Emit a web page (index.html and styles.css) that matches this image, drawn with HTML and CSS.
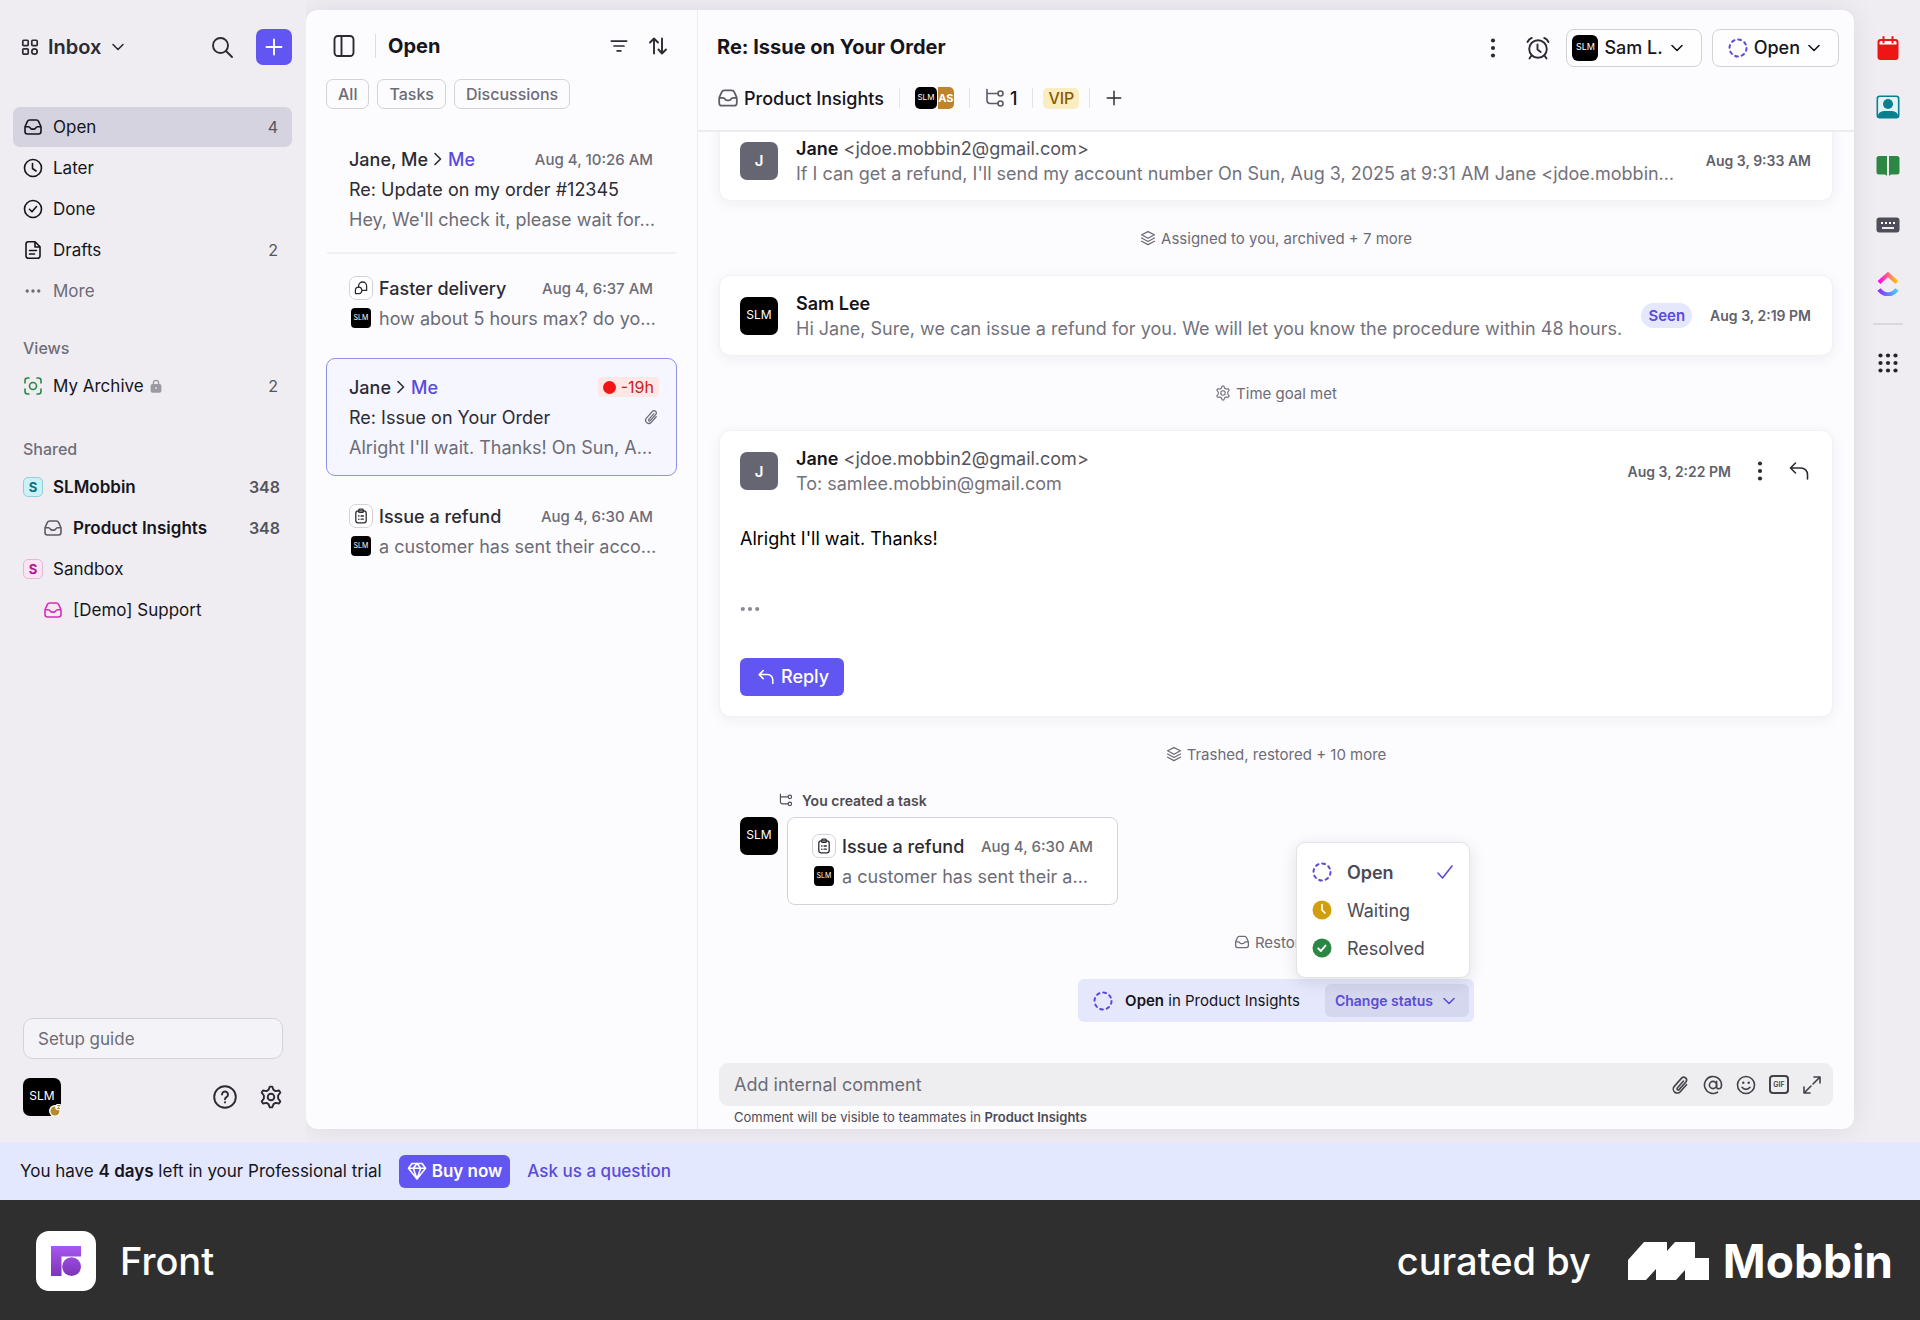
FILE: index.html
```html
<!DOCTYPE html>
<html lang="en">
<head>
<meta charset="utf-8">
<meta name="viewport" content="width=device-width, initial-scale=1">
<title>Front – Re: Issue on Your Order</title>
<link rel="stylesheet" href="styles.css">
</head>
<body>
<svg class="sprite" aria-hidden="true">
  <defs>
    <linearGradient id="cu-top" x1="0" x2="1"><stop offset="0" stop-color="#ff02f0"/><stop offset=".6" stop-color="#ff7a6b"/><stop offset="1" stop-color="#ffc800"/></linearGradient>
    <linearGradient id="cu-bottom" x1="0" x2="1"><stop offset="0" stop-color="#8930fd"/><stop offset="1" stop-color="#49ccf9"/></linearGradient>
    <linearGradient id="front-fill" gradientUnits="userSpaceOnUse" x1="0" y1="15" x2="0" y2="45"><stop offset="0" stop-color="#a857f0"/><stop offset="1" stop-color="#7d35b8"/></linearGradient>
  </defs>
  <symbol id="i-apps" viewBox="0 0 20 20"><rect x="2" y="2.500" width="6" height="6" rx="1"/><rect x="12" y="2.500" width="6" height="6" rx="1"/><rect x="2" y="12" width="6" height="6" rx="1"/><circle cx="15" cy="15" r="3"/></symbol>
  <symbol id="i-chevron" viewBox="0 0 16 16"><path d="M3 5.500l5 5 5-5"/></symbol>
  <symbol id="i-right" viewBox="0 0 12 16"><path d="M3 2.500l5.500 5.500L3 13.500"/></symbol>
  <symbol id="i-search" viewBox="0 0 24 24"><circle cx="10.500" cy="10.500" r="7.500"/><path d="M16 16l6 6"/></symbol>
  <symbol id="i-plus" viewBox="0 0 20 20"><path d="M10 2.500v15M2.500 10h15"/></symbol>
  <symbol id="i-inbox" viewBox="0 0 20 20"><path d="M4.300 4.600C4.800 3.500 5.600 3 6.700 3h6.600c1.100 0 1.900.5 2.400 1.600l2 4.400c.2.500.3.900.3 1.400v4.100a2.500 2.500 0 0 1-2.500 2.500h-11A2.500 2.500 0 0 1 2 14.500v-4.100c0-.5.1-.9.3-1.400zM2.200 9.800h3.300c.9 0 1.300.4 1.700 1.100.4.800 1 1.200 1.800 1.200h2c.8 0 1.400-.4 1.800-1.200.4-.7.8-1.100 1.700-1.100h3.300"/></symbol>
  <symbol id="i-clock" viewBox="0 0 20 20"><circle cx="10" cy="10" r="8.500"/><path d="M9.500 5.500v5l3.500 2.500"/></symbol>
  <symbol id="i-done" viewBox="0 0 20 20"><circle cx="10" cy="10" r="8.500"/><path d="M6.500 10.300l2.500 2.500 4.500-5.300"/></symbol>
  <symbol id="i-doc" viewBox="0 0 20 20"><path d="M3 4a2.300 2.300 0 0 1 2.300-2.300H12l5 5V16a2.300 2.300 0 0 1-2.300 2.300H5.300A2.300 2.300 0 0 1 3 16zM12 2v5h5M6.500 10.500h7M6.500 14h5"/></symbol>
  <symbol id="i-dots" viewBox="0 0 20 20"><g fill="currentColor" stroke="none"><circle cx="2.800" cy="10" r="2.100"/><circle cx="10" cy="10" r="2.100"/><circle cx="17.200" cy="10" r="2.100"/></g></symbol>
  <symbol id="i-kebab" viewBox="0 0 24 24"><g fill="currentColor" stroke="none"><circle cx="12" cy="3" r="2.500"/><circle cx="12" cy="12" r="2.500"/><circle cx="12" cy="21" r="2.500"/></g></symbol>
  <symbol id="i-view" viewBox="0 0 20 20"><path d="M2 7V4.500A2.500 2.500 0 0 1 4.500 2H6M14 2h1.500A2.500 2.500 0 0 1 18 4.500V7M18 13v2.500a2.500 2.500 0 0 1-2.500 2.500H14M6 18H4.500A2.500 2.500 0 0 1 2 15.500V13"/><circle cx="10" cy="10" r="3.500"/></symbol>
  <symbol id="i-lock" viewBox="0 0 14 16"><path d="M4 7V4.500a3 3 0 0 1 6 0V7"/><rect x="1.500" y="6.500" width="11" height="8.500" rx="1.500" fill="currentColor"/><circle cx="7" cy="10.500" r=".9" fill="#fff" stroke="none"/></symbol>
  <symbol id="i-help" viewBox="0 0 24 24"><circle cx="12" cy="12" r="10.800"/><path d="M9 9.500a3 3 0 1 1 4.500 2.600c-1 .6-1.500 1-1.500 2.200"/><circle cx="12" cy="17.300" r="1.100" fill="currentColor" stroke="none"/></symbol>
  <symbol id="i-gear" viewBox="0 0 24 24"><path d="M10.800 1.600h2.400l1.300 3.300 2 1.200 3.500-.6 1.300 2.100-2.200 2.900v3l2.200 2.900-1.300 2.100-3.500-.6-2 1.200-1.300 3.300h-2.400l-1.300-3.300-2-1.200-3.500.6-1.300-2.100 2.200-2.900v-3L2.700 7.600 4 5.500l3.500.6 2-1.200z"/><circle cx="12" cy="12" r="3.300"/></symbol>
  <symbol id="i-panel" viewBox="0 0 22 22"><rect x="1.500" y="1" width="19" height="20" rx="3.500"/><path d="M8.500 1v20"/></symbol>
  <symbol id="i-filter" viewBox="0 0 20 20"><path d="M1.500 4.500h17M4.500 10h11M8 15.500h4"/></symbol>
  <symbol id="i-sort" viewBox="0 0 20 20"><path d="M6 17.500v-15M2 6.500l4-4 4 4M14 2.500v15M10.500 13.500l3.500 4 4-4"/></symbol>
  <symbol id="i-chat" viewBox="0 0 20 20"><path d="M7 9V7.500a5 5 0 0 1 10 0V13h-5"/><path d="M3 17v-4a4 4 0 0 1 8 0 3.500 3.500 0 0 1-3.500 4z"/></symbol>
  <symbol id="i-task" viewBox="0 0 20 20"><rect x="3.500" y="3.500" width="13" height="15" rx="3"/><rect x="7" y="1.500" width="6" height="4" rx="1.500"/><path d="M7 10h.5M10 10h3M7 14h.5M10 14h3"/></symbol>
  <symbol id="i-clip" viewBox="0 0 20 20"><path d="M13.500 6l-6.200 7a1.200 1.200 0 0 0 1.800 1.600l7-7.900a2.900 2.900 0 0 0-4.300-3.800L4.300 11.400a4 4 0 0 0 6 5.300l6.200-7"/></symbol>
  <symbol id="i-tree" viewBox="0 0 20 20"><path d="M2 1.500v11a3 3 0 0 0 3 3h8M2 5.500h11"/><circle cx="15.500" cy="5.500" r="2.500"/><circle cx="15.500" cy="15.500" r="2.500"/></symbol>
  <symbol id="i-alarm" viewBox="0 0 24 24"><circle cx="12" cy="13" r="8.800"/><path d="M11.500 8.500v5l3.200 2.500M1.500 6C2.300 4.200 3.800 2.700 5.800 1.900M22.500 6c-.8-1.800-2.300-3.300-4.300-4.100M5.500 19.500l-2 3M18.500 19.500l2 3"/></symbol>
  <symbol id="i-dashed" viewBox="0 0 20 20"><circle cx="10" cy="10" r="8.500" stroke-width="2" stroke-dasharray="2.800 3.875"/></symbol>
  <symbol id="i-layers" viewBox="0 0 20 20"><path d="M10 2l8 4-8 4.300L2 6zM2 10l8 4.300 8-4.300M2 14l8 4.300 8-4.300"/></symbol>
  <symbol id="i-reply" viewBox="0 0 20 20"><path d="M6.500 2L1.500 7l5 5M1.500 7H12a6.500 6.500 0 0 1 6.500 6.500V18"/></symbol>
  <symbol id="i-check" viewBox="0 0 18 18"><path d="M2 10l4.500 5L16 3"/></symbol>
  <symbol id="i-at" viewBox="0 0 20 20"><circle cx="10" cy="10" r="3.600"/><path d="M13.600 6.400V11.500c0 1.500.8 2.300 2 2.300 1.800 0 2.900-1.600 2.900-3.800a8.500 8.500 0 1 0-4 7.200"/></symbol>
  <symbol id="i-smile" viewBox="0 0 20 20"><circle cx="10" cy="10" r="8.500"/><path d="M6 12.300c2 2.700 6 2.700 8 0"/><g fill="currentColor" stroke="none"><circle cx="7.300" cy="7.700" r="1.200"/><circle cx="12.700" cy="7.700" r="1.200"/></g></symbol>
  <symbol id="i-expand" viewBox="0 0 20 20"><path d="M12 2h6v6M18 2l-7 7M8 18H2v-6M2 18l7-7"/></symbol>
  <symbol id="i-gem" viewBox="0 0 20 20"><path d="M5 2.500h10l3.500 4.800L10 18 1.500 7.300zM1.500 7.300h17M10 2.500L6.300 7.300 10 18l3.700-10.700z"/></symbol>
</svg>

<div class="app">
  <aside class="sidebar">
    <header class="sidebar-head">
      <button class="plain workspace-switch"><svg class="ico s18 bold"><use href="#i-apps"/></svg><span>Inbox</span><svg class="ico s16"><use href="#i-chevron"/></svg></button>
      <button class="plain" aria-label="Search"><svg class="ico s24"><use href="#i-search"/></svg></button>
      <button class="compose" aria-label="Compose"><svg class="ico s20 bold"><use href="#i-plus"/></svg></button>
    </header>
    <nav class="nav">
      <a class="nav-row active" href="#"><svg class="ico s20"><use href="#i-inbox"/></svg><span>Open</span><span class="count">4</span></a>
      <a class="nav-row" href="#"><svg class="ico s20"><use href="#i-clock"/></svg><span>Later</span></a>
      <a class="nav-row" href="#"><svg class="ico s20"><use href="#i-done"/></svg><span>Done</span></a>
      <a class="nav-row" href="#"><svg class="ico s20"><use href="#i-doc"/></svg><span>Drafts</span><span class="count">2</span></a>
      <a class="nav-row muted" href="#"><svg class="ico s20 dots"><use href="#i-dots"/></svg><span>More</span></a>
    </nav>
    <h2 class="nav-title">Views</h2>
    <nav class="nav">
      <a class="nav-row" href="#"><svg class="ico s20 green"><use href="#i-view"/></svg><span>My Archive</span><svg class="ico lock"><use href="#i-lock"/></svg><span class="count">2</span></a>
    </nav>
    <h2 class="nav-title shared">Shared</h2>
    <nav class="nav">
      <a class="nav-row strong" href="#"><span class="team teal">S</span><span>SLMobbin</span><span class="count">348</span></a>
      <a class="nav-row strong child" href="#"><svg class="ico s20 grey"><use href="#i-inbox"/></svg><span>Product Insights</span><span class="count">348</span></a>
      <a class="nav-row" href="#"><span class="team pink">S</span><span>Sandbox</span></a>
      <a class="nav-row child" href="#"><svg class="ico s20 magenta"><use href="#i-inbox"/></svg><span>[Demo] Support</span></a>
    </nav>
    <footer class="sidebar-foot">
      <button class="setup">Setup guide</button>
      <div class="me">
        <span class="me-avatar"><span class="avatar a38">SLM</span><svg class="status-badge" viewBox="0 0 12 12"><circle cx="6" cy="7" r="6" fill="#fff"/><circle cx="6" cy="7" r="4.500" fill="#b78a2b"/><circle cx="9.500" cy="3" r="3.300" fill="#fff"/><path d="M8 1.500h3L8.500 4.500h2.500" fill="none" stroke="#b78a2b"/></svg></span>
        <button class="plain" aria-label="Help"><svg class="ico s24"><use href="#i-help"/></svg></button>
        <button class="plain" aria-label="Settings"><svg class="ico s24"><use href="#i-gear"/></svg></button>
      </div>
    </footer>
  </aside>

  <main class="workspace">
    <section class="list">
      <header class="list-head">
        <button class="plain" aria-label="Toggle sidebar"><svg class="ico s22 bold"><use href="#i-panel"/></svg></button>
        <h1>Open</h1>
        <button class="plain" aria-label="Filter"><svg class="ico s18 bold"><use href="#i-filter"/></svg></button>
        <button class="plain" aria-label="Sort"><svg class="ico s20 bold"><use href="#i-sort"/></svg></button>
      </header>
      <div class="chips"><button>All</button><button>Tasks</button><button>Discussions</button></div>
      <div class="items">
        <article class="item divided">
          <div class="line"><span class="who">Jane, Me<svg class="ico arrow"><use href="#i-right"/></svg><span class="to">Me</span></span><time>Aug 4, 10:26 AM</time></div>
          <div class="line"><span class="subject">Re: Update on my order #12345</span></div>
          <div class="line"><span class="snippet">Hey, We'll check it, please wait for…</span></div>
        </article>
        <article class="item">
          <div class="line"><span class="kind"><svg class="ico s16"><use href="#i-chat"/></svg></span><span class="who">Faster delivery</span><time>Aug 4, 6:37 AM</time></div>
          <div class="line"><span class="slot"><span class="avatar a20">SLM</span></span><span class="snippet">how about 5 hours max? do yo…</span></div>
        </article>
        <article class="item selected">
          <div class="line"><span class="who">Jane<svg class="ico arrow"><use href="#i-right"/></svg><span class="to">Me</span></span><span class="overdue">-19h</span></div>
          <div class="line"><span class="subject">Re: Issue on Your Order</span><svg class="ico s16 clip"><use href="#i-clip"/></svg></div>
          <div class="line"><span class="snippet">Alright I'll wait. Thanks! On Sun, A…</span></div>
        </article>
        <article class="item">
          <div class="line"><span class="kind"><svg class="ico s16"><use href="#i-task"/></svg></span><span class="who">Issue a refund</span><time>Aug 4, 6:30 AM</time></div>
          <div class="line"><span class="slot"><span class="avatar a20">SLM</span></span><span class="snippet">a customer has sent their acco…</span></div>
        </article>
      </div>
    </section>

    <section class="detail">
      <header class="detail-head">
        <div class="title-row">
          <h1>Re: Issue on Your Order</h1>
          <button class="plain" aria-label="More actions"><svg class="ico s20"><use href="#i-kebab"/></svg></button>
          <button class="plain snooze" aria-label="Snooze"><svg class="ico s24"><use href="#i-alarm"/></svg></button>
          <button class="picker assignee"><span class="avatar a26">SLM</span><span>Sam L.</span><svg class="ico s16"><use href="#i-chevron"/></svg></button>
          <button class="picker"><svg class="ico s20 violet"><use href="#i-dashed"/></svg><span>Open</span><svg class="ico s16"><use href="#i-chevron"/></svg></button>
        </div>
        <div class="meta-row">
          <span class="inbox-name"><svg class="ico s22 grey"><use href="#i-inbox"/></svg>Product Insights</span>
          <i class="sep"></i>
          <span class="people"><span class="avatar a22">SLM</span><span class="initials">AS</span></span>
          <i class="sep"></i>
          <span class="subtasks"><svg class="ico s20 grey"><use href="#i-tree"/></svg>1</span>
          <i class="sep"></i>
          <span class="tag">VIP</span>
          <i class="sep"></i>
          <button class="plain" aria-label="Add tag"><svg class="ico s18"><use href="#i-plus"/></svg></button>
        </div>
      </header>

      <div class="thread">
        <article class="card">
          <span class="letter">J</span>
          <div class="body"><p><b>Jane</b> <span class="address">&lt;jdoe.mobbin2@gmail.com&gt;</span></p><p class="preview">If I can get a refund, I'll send my account number On Sun, Aug 3, 2025 at 9:31 AM Jane &lt;jdoe.mobbin…</p></div>
          <time>Aug 3, 9:33 AM</time>
        </article>
        <p class="event"><svg class="ico s16"><use href="#i-layers"/></svg>Assigned to you, archived + 7 more</p>
        <article class="card">
          <span class="avatar a38">SLM</span>
          <div class="body"><p><b>Sam Lee</b></p><p class="preview">Hi Jane, Sure, we can issue a refund for you. We will let you know the procedure within 48 hours.</p></div>
          <span class="seen">Seen</span>
          <time>Aug 3, 2:19 PM</time>
        </article>
        <p class="event"><svg class="ico s16"><use href="#i-gear"/></svg>Time goal met</p>
        <article class="card open">
          <span class="letter">J</span>
          <div class="body"><p><b>Jane</b> <span class="address">&lt;jdoe.mobbin2@gmail.com&gt;</span></p><p class="preview">To: samlee.mobbin@gmail.com</p></div>
          <div class="card-tools">
            <time>Aug 3, 2:22 PM</time>
            <button class="plain" aria-label="Message actions"><svg class="ico s20"><use href="#i-kebab"/></svg></button>
            <button class="plain" aria-label="Reply"><svg class="ico s20"><use href="#i-reply"/></svg></button>
          </div>
          <div class="message">
            <p>Alright I'll wait. Thanks!</p>
            <button class="plain quoted" aria-label="Show quoted text"><svg class="ico s20"><use href="#i-dots"/></svg></button>
            <button class="reply"><svg class="ico s16 bold"><use href="#i-reply"/></svg>Reply</button>
          </div>
        </article>
        <p class="event"><svg class="ico s16"><use href="#i-layers"/></svg>Trashed, restored + 10 more</p>
        <div class="task">
          <p class="task-title"><svg class="ico s14"><use href="#i-tree"/></svg>You created a task</p>
          <span class="avatar a38">SLM</span>
          <article class="task-card">
            <div class="line"><span class="kind"><svg class="ico s16"><use href="#i-task"/></svg></span><span class="who">Issue a refund</span><time>Aug 4, 6:30 AM</time></div>
            <div class="line"><span class="slot"><span class="avatar a20">SLM</span></span><span class="snippet">a customer has sent their a…</span></div>
          </article>
        </div>
        <p class="event"><svg class="ico s16"><use href="#i-inbox"/></svg>Restored</p>
        <div class="status-bar">
          <svg class="ico s20 violet"><use href="#i-dashed"/></svg>
          <span class="status-text"><b>Open</b> in Product Insights</span>
          <div class="status-picker">
            <button class="change">Change status<svg class="ico s16"><use href="#i-chevron"/></svg></button>
            <div class="menu" role="menu">
              <button class="current" role="menuitem"><svg class="ico s20 violet"><use href="#i-dashed"/></svg><span>Open</span><svg class="ico s18 violet"><use href="#i-check"/></svg></button>
              <button role="menuitem"><svg class="s20" viewBox="0 0 20 20"><circle cx="10" cy="10" r="9.500" fill="#d29f0c"/><path d="M10 4.500v5.500l3 3" fill="none" stroke="#fff" stroke-width="1.700" stroke-linecap="round"/></svg><span>Waiting</span></button>
              <button role="menuitem"><svg class="s20" viewBox="0 0 20 20"><circle cx="10" cy="10" r="9.500" fill="#2c8745"/><path d="M6.200 10.300l2.700 2.700 4.600-5.400" fill="none" stroke="#fff" stroke-width="1.900" stroke-linecap="round" stroke-linejoin="round"/></svg><span>Resolved</span></button>
            </div>
          </div>
        </div>
      </div>

      <footer class="composer">
        <div class="comment-box">
          <input type="text" placeholder="Add internal comment" aria-label="Add internal comment">
          <button class="plain" aria-label="Attach"><svg class="ico s20"><use href="#i-clip"/></svg></button>
          <button class="plain" aria-label="Mention"><svg class="ico s20"><use href="#i-at"/></svg></button>
          <button class="plain" aria-label="Emoji"><svg class="ico s20"><use href="#i-smile"/></svg></button>
          <button class="plain gif">GIF</button>
          <button class="plain" aria-label="Expand"><svg class="ico s20"><use href="#i-expand"/></svg></button>
        </div>
        <p class="note">Comment will be visible to teammates in <b>Product Insights</b></p>
      </footer>
    </section>
  </main>

  <aside class="rail">
    <button class="plain" aria-label="Calendar"><svg class="s24" viewBox="0 0 24 24"><path d="M4.500 3h15A3 3 0 0 1 22.500 6v15a3 3 0 0 1-3 3h-15a3 3 0 0 1-3-3V6a3 3 0 0 1 3-3z" fill="#f01515"/><path d="M3.500 8.500V6.500a1.500 1.500 0 0 1 1.500-1.500h14a1.500 1.500 0 0 1 1.500 1.500v2z" fill="#fff"/><path d="M7.500 1v5.500M16.500 1v5.500" stroke="#f01515" stroke-width="2" stroke-linecap="round"/></svg></button>
    <button class="plain" aria-label="Contacts"><svg class="s24" viewBox="0 0 24 24"><rect x="1.300" y="1.300" width="21.400" height="21.400" rx="2.500" fill="#e3f3f5" stroke="#08808f" stroke-width="1.600"/><circle cx="12" cy="9" r="5" fill="#08808f"/><path d="M2 22v-2c1-3 4-4 6-4h8c2 0 5 1 6 4v2z" fill="#08808f"/></svg></button>
    <button class="plain" aria-label="Knowledge base"><svg class="s24" viewBox="0 0 24 24"><path d="M3 2h8v20c-1-1.300-2-1.500-3-1.500H3a2.500 2.500 0 0 1-2.500-2.500V4.500A2.500 2.500 0 0 1 3 2zM21 2h-8v20c1-1.300 2-1.500 3-1.500h5a2.500 2.500 0 0 0 2.500-2.500V4.500A2.500 2.500 0 0 0 21 2z" fill="#2c8745"/></svg></button>
    <button class="plain" aria-label="Shortcuts"><svg class="s24" viewBox="0 0 24 24"><rect x=".5" y="4.500" width="23" height="15" rx="3" fill="#4f4d57"/><path d="M5 10h2M9 10h2M13 10h2M17 10h2" stroke="#fff" stroke-width="2"/><path d="M6 15h12" stroke="#fff" stroke-width="1.800"/></svg></button>
    <button class="plain" aria-label="ClickUp"><svg class="s24" viewBox="0 0 24 24" fill="none" stroke-width="4.200"><path d="M3 10.500l9-8 9 8" stroke="url(#cu-top)"/><path d="M3 17.500c5 6.500 13 6.500 18 0" stroke="url(#cu-bottom)"/></svg></button>
    <hr>
    <button class="plain" aria-label="All apps"><svg class="s24" viewBox="0 0 24 24" fill="#26252d"><circle cx="4.500" cy="4.500" r="2.100"/><circle cx="12" cy="4.500" r="2.100"/><circle cx="19.500" cy="4.500" r="2.100"/><circle cx="4.500" cy="12" r="2.100"/><circle cx="12" cy="12" r="2.100"/><circle cx="19.500" cy="12" r="2.100"/><circle cx="4.500" cy="19.500" r="2.100"/><circle cx="12" cy="19.500" r="2.100"/><circle cx="19.500" cy="19.500" r="2.100"/></svg></button>
  </aside>
</div>

<div class="trial">
  <span>You have <b>4 days</b> left in your Professional trial</span>
  <button class="buy"><svg class="ico s20"><use href="#i-gem"/></svg>Buy now</button>
  <a href="#">Ask us a question</a>
</div>

<footer class="credits">
  <svg class="front-logo" viewBox="0 0 60 60"><rect width="60" height="60" rx="13" fill="#fff"/><path d="M15 15h30v10.500H25.500V45H15z" fill="url(#front-fill)"/><circle cx="35.600" cy="35.600" r="9.400" fill="url(#front-fill)"/></svg>
  <span class="product">Front</span>
  <span class="curated">curated by</span>
  <svg class="mobbin-logo" viewBox="0 0 81 38"><path d="M0 18L16 0h23v9l8-9h20v16h14v22H57V28l-9 10H28V27L18 38H0z" fill="#fff"/></svg>
  <span class="mobbin">Mobbin</span>
</footer>
</body>
</html>
```
FILE: styles.css
```css
* { box-sizing: border-box; }

:root {
  --ink: #16151b;
  --text: #2c2b33;
  --muted: #6c6c76;
  --violet: #5b4bd9;
  --accent: #6256f2;
  --line: #ececef;
  --border: #d3d2d8;
}

body {
  margin: 0;
  height: 100vh;
  display: flex;
  flex-direction: column;
  font-family: Inter, "Liberation Sans", sans-serif;
  font-size: 18px;
  color: var(--ink);
  background: #efedf2;
}

h1, h2, p { margin: 0; }
b { font-weight: 600; }
a { color: inherit; text-decoration: none; }
button { font: inherit; color: inherit; cursor: pointer; }

.sprite { position: absolute; width: 0; height: 0; }

.ico { fill: none; stroke: currentColor; stroke-width: 1.6; stroke-linecap: round; stroke-linejoin: round; flex: none; }
.s14 { width: 14px; height: 14px; flex: none; }
.s16 { width: 16px; height: 16px; flex: none; }
.s18 { width: 18px; height: 18px; flex: none; }
.s20 { width: 20px; height: 20px; flex: none; }
.s22 { width: 22px; height: 22px; flex: none; }
.s24 { width: 24px; height: 24px; flex: none; }
.ico.s24, .ico.bold { stroke-width: 1.9; }
.green { color: #2c8745; }
.grey { color: #5c5b66; }
.magenta { color: #d62fb5; }
.violet { color: var(--violet); }

.avatar { display: flex; align-items: center; justify-content: center; flex: none; padding-bottom: 2px; background: #000; color: #fff; line-height: 1; font-weight: 400; }
.a20 { width: 20px; height: 20px; border-radius: 4px; font-size: 7px; }
.a22 { width: 22px; height: 22px; border-radius: 5px; font-size: 8px; }
.a26 { width: 26px; height: 26px; border-radius: 6px; font-size: 9px; }
.a38 { width: 38px; height: 38px; border-radius: 7px; font-size: 12px; }

.plain { display: flex; align-items: center; justify-content: center; padding: 0; border: 0; background: none; color: var(--text); }

.app { flex: 1; min-height: 0; display: flex; overflow: hidden; }

/* Sidebar */
.sidebar { position: relative; z-index: 1; width: 306px; flex: none; display: flex; flex-direction: column; padding: 29px 14px 26px 13px; background: #efedf2; }
.sidebar-head { display: flex; align-items: center; height: 36px; margin-bottom: 42px; padding-left: 8px; gap: 22px; }
.workspace-switch { gap: 9px; margin-right: auto; font-size: 20px; font-weight: 600; }
.compose { width: 36px; height: 36px; display: flex; align-items: center; justify-content: center; padding: 0; border: 0; border-radius: 7px; background: var(--accent); color: #fff; }
.nav { display: flex; flex-direction: column; gap: 1px; }
.nav-row { display: flex; align-items: center; gap: 10px; height: 40px; padding: 0 14px 0 10px; border-radius: 7px; font-size: 17px; }
.nav-row.active { background: #d5d3e0; }
.nav-row.child { padding-left: 30px; }
.nav-row.strong { padding-right: 12px; font-weight: 600; }
.nav-row.muted { color: var(--muted); }
.dots { padding: 2px; }
.count { margin-left: auto; font-size: 16px; color: #55545e; }
.lock { width: 12px; height: 14px; color: #9b9aa2; margin-left: -4px; }
.nav-title { height: 20px; margin: 27px 0 8px 10px; font-size: 16px; line-height: 20px; font-weight: 500; color: #6f6e78; }
.nav-title.shared { margin-top: 33px; }
.team { width: 20px; height: 20px; display: grid; place-items: center; border: 1px solid; border-radius: 5px; font-size: 13px; font-weight: 700; }
.team.teal { background: #c9f1f6; border-color: #93cfd8; color: #0b7285; }
.team.pink { background: #fce4f4; border-color: #dcbcd3; color: #b0178f; }
.sidebar-foot { margin-top: auto; padding: 0 9px 0 10px; }
.setup { width: 100%; height: 41px; padding: 0 14px; border: 1px solid var(--border); border-radius: 10px; background: #f4f3f7; text-align: left; font-size: 17px; color: var(--muted); }
.me { display: flex; align-items: center; gap: 22px; margin-top: 19px; }
.me-avatar { position: relative; margin-right: auto; }
.status-badge { position: absolute; right: 0; bottom: 0; width: 12px; height: 12px; }

/* Workspace shell */
.workspace { flex: 1; min-width: 0; display: flex; margin: 10px 0 13px; border-radius: 12px; background: #fcfbfe; box-shadow: 0 0 28px rgba(30, 30, 40, 0.08); overflow: hidden; }

/* Conversation list */
.list { width: 392px; flex: none; padding: 0 20px; border-right: 1px solid var(--line); }
.list-head { display: flex; align-items: center; height: 40px; margin-top: 16px; padding: 0 9px 0 7px; gap: 20px; }
.list-head h1 { flex: 1; padding-left: 12px; border-left: 1px solid #dddce2; font-size: 20px; line-height: 24px; font-weight: 700; }
.chips { display: flex; gap: 8px; margin-top: 13px; }
.chips button { height: 30px; padding: 0 11px; border: 1px solid var(--border); border-radius: 7px; background: none; font-size: 16px; font-weight: 500; color: var(--muted); }
.items { display: flex; flex-direction: column; gap: 11px; margin-top: 21px; }
.item { position: relative; padding: 13px 23px 13px 22px; border: 1px solid transparent; border-radius: 9px; }
.item.selected { background: #f5f6ff; border-color: #8f93ea; }
.item.divided::after { content: ""; position: absolute; left: 0; right: 0; bottom: -7px; border-bottom: 2px solid #f0f0f3; }
.line { display: flex; align-items: center; height: 30px; white-space: nowrap; color: var(--text); }
.line time { margin-left: auto; font-size: 15px; font-weight: 500; color: var(--muted); }
.who { display: flex; align-items: center; font-weight: 500; }
.arrow { width: 12px; height: 16px; margin: 0 4px; }
.to { color: var(--violet); }
.snippet { flex: 1; margin-right: -10px; overflow: hidden; text-overflow: ellipsis; color: var(--muted); }
.kind, .slot { width: 24px; height: 24px; display: grid; place-items: center; flex: none; margin-right: 6px; }
.kind { border: 1px solid var(--border); border-radius: 7px; background: #fff; }
.overdue { display: flex; align-items: center; gap: 5px; margin: 0 -6px 0 auto; padding: 0 5px; border-radius: 4px; background: #ffe7e5; font-size: 16px; line-height: 20px; color: #c8231c; }
.overdue::before { content: ""; width: 13px; height: 13px; border-radius: 50%; background: #f01515; }
.clip { margin: 0 -6px 0 auto; color: var(--muted); }

/* Conversation detail */
.detail { flex: 1; min-width: 0; display: flex; flex-direction: column; }
.detail-head { padding: 19px 15px 19px 19px; border-bottom: 2px solid var(--line); }
.title-row { display: flex; align-items: center; height: 38px; }
.title-row h1 { flex: 1; padding-bottom: 2px; font-size: 20px; line-height: 24px; font-weight: 700; }
.snooze { margin: 0 16px 0 23px; }
.picker { display: flex; align-items: center; gap: 6px; height: 38px; padding: 0 16px 1px 15px; border: 1px solid var(--border); border-radius: 8px; background: #fefdff; font-weight: 500; }
.picker.assignee { padding-left: 5px; margin-right: 10px; }
.meta-row { display: flex; align-items: center; gap: 15px; height: 26px; margin-top: 18px; font-weight: 500; }
.inbox-name { display: flex; align-items: center; gap: 5px; }
.sep { width: 1px; height: 20px; background: #e4e3e8; }
.people { display: flex; align-items: center; gap: 1px; }
.initials { width: 16px; height: 22px; display: flex; justify-content: center; border-radius: 0 5px 5px 0; background: #bf842a; color: #fff; font-size: 11px; line-height: 22px; font-weight: 700; }
.subtasks { display: flex; align-items: center; gap: 5px; }
.tag { margin: 0 -5px; padding: 0 5px; border-radius: 5px; background: #faedbf; color: #8a5a00; font-size: 16px; line-height: 21px; }

.thread { flex: 1; min-height: 0; overflow: hidden; display: flex; flex-direction: column; justify-content: flex-end; padding: 0 21px 41px; }
.thread > * { flex: none; }
.card { display: flex; align-items: center; height: 81px; padding: 0 21px 0 20px; border: 1px solid #f1f1f4; border-radius: 11px; background: #fff; box-shadow: 0 3px 14px rgba(30, 30, 50, 0.06); }
.letter { width: 38px; height: 38px; flex: none; display: grid; place-items: center; border-radius: 7px; background: #666672; color: #fff; font-size: 15px; font-weight: 600; }
.body { flex: 1; min-width: 0; margin: 0 28px 0 18px; line-height: 25px; }
.address { color: #55545e; }
.preview { overflow: hidden; text-overflow: ellipsis; white-space: nowrap; color: #73727c; }
.card time { font-size: 14px; font-weight: 600; color: #62616b; }
.seen { margin: 0 18px 0 -12px; padding: 0 7px; border-radius: 13px; background: #e5e7fd; color: var(--violet); font-size: 15px; line-height: 25px; font-weight: 600; }
.card.open { height: auto; flex-wrap: wrap; padding-top: 15px; padding-bottom: 20px; }
.card-tools { display: flex; align-items: center; gap: 19px; margin-right: 2px; }
.message { flex-basis: 100%; display: flex; flex-direction: column; align-items: flex-start; padding-top: 30px; }
.message p { line-height: 25px; color: #000; }
.quoted { margin: 48px 0 39px; color: #8b8a93; }
.reply { display: flex; align-items: center; gap: 7px; height: 38px; padding: 0 15px 1px 18px; border: 0; border-radius: 6px; background: var(--accent); color: #fff; font-weight: 500; }
.event { display: flex; align-items: center; justify-content: center; gap: 5px; height: 74px; font-size: 15px; color: var(--muted); }

.task { display: grid; grid-template-columns: 38px 331px; column-gap: 9px; margin-left: 21px; }
.task-title { grid-column: 1 / -1; display: flex; align-items: center; gap: 9px; height: 18px; margin-bottom: 8px; padding-left: 39px; font-size: 14px; font-weight: 600; color: #4c4b55; }
.task-card { height: 88px; padding: 13px 24px; border: 1px solid var(--border); border-radius: 8px; background: #fff; }

.status-bar { align-self: center; display: flex; align-items: center; height: 43px; padding: 0 5px 0 15px; border-radius: 6px; background: #e5e8fd; font-size: 15px; }
.status-text { margin: 0 25px 0 12px; }
.status-picker { position: relative; }
.change { display: flex; align-items: center; gap: 8px; height: 33px; padding: 0 12px 0 10px; border: 0; border-radius: 6px; background: #d5d7ef; color: var(--violet); font-size: 14px; font-weight: 600; }
.menu { position: absolute; right: -1px; bottom: 39px; width: 174px; padding: 10px 0; border: 1px solid #e3e2e7; border-radius: 9px; background: #fff; box-shadow: 0 4px 16px rgba(30, 30, 50, 0.12); }
.menu button { display: flex; align-items: center; width: 100%; height: 38px; padding: 0 15px; border: 0; background: none; font-size: 18px; color: #4c4b55; }
.menu span { flex: 1; margin-left: 15px; text-align: left; }
.menu .current { font-weight: 600; }

.composer { padding: 0 21px 4px; }
.comment-box { display: flex; align-items: center; gap: 13px; height: 43px; padding: 0 11px 0 15px; border-radius: 9px; background: #eeeef0; }
.comment-box input { flex: 1; min-width: 0; padding: 0; border: 0; outline: 0; background: none; font: inherit; }
.comment-box input::placeholder { color: var(--muted); opacity: 1; }
.comment-box .plain { color: #43424b; }
.comment-box .gif { width: 20px; height: 19px; border: 2px solid #43424b; border-radius: 4px; font-size: 7px; font-weight: 600; }
.note { margin: 3px 0 0 15px; font-size: 13px; line-height: 16px; color: #4c4b55; }

/* App rail */
.rail { width: 66px; flex: none; display: flex; flex-direction: column; align-items: center; gap: 35px; padding: 36px 0 0 2px; }
.rail hr { width: 30px; margin: -8px 0 -9px; border: 0; border-top: 2px solid #d8d7dd; }

/* Trial banner */
.trial { position: relative; display: flex; align-items: center; flex: none; gap: 17px; height: 58px; padding: 0 20px; background: #e4e8fe; font-size: 17px; }
.trial a { color: var(--violet); font-weight: 500; }
.buy { display: flex; align-items: center; gap: 5px; height: 33px; padding: 0 8px; border: 0; border-radius: 6px; background: var(--accent); color: #fff; font-weight: 600; }

/* Credits */
.credits { display: flex; align-items: center; flex: none; height: 120px; padding: 2px 27px 0 36px; background: #2f2f2f; color: #fff; font-size: 38px; font-weight: 500; }
.front-logo { width: 60px; height: 60px; margin-right: 24px; }
.curated { margin-left: auto; }
.mobbin-logo { width: 81px; height: 38px; margin: 0 14px 0 37px; }
.mobbin { font-size: 46px; font-weight: 700; }
```
